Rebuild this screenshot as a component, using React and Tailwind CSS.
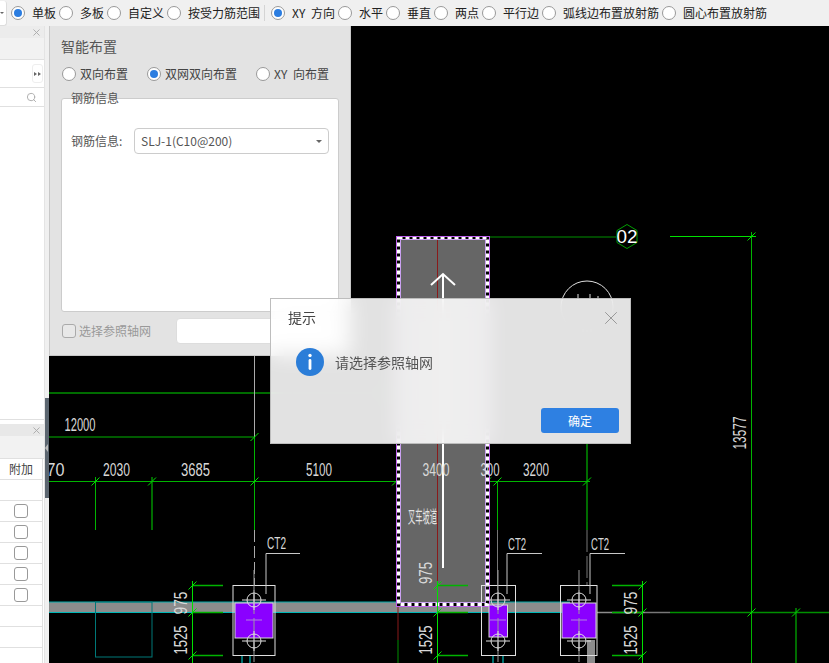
import { X, Search } from "lucide-react";

const topOptions = [
  { label: "单板", on: true },
  { label: "多板" },
  { label: "自定义" },
  { label: "按受力筋范围", sep: true },
  { label: "XY 方向", on: true },
  { label: "水平" },
  { label: "垂直" },
  { label: "两点" },
  { label: "平行边" },
  { label: "弧线边布置放射筋" },
  { label: "圆心布置放射筋" },
];

function Radio({ on }) {
  return (
    <span className="w-[14px] h-[14px] shrink-0 rounded-full border border-[#999] bg-white flex items-center justify-center">
      {on && <span className="w-[8px] h-[8px] rounded-full bg-[#2b7de0]" />}
    </span>
  );
}

function Check() {
  return <span className="block w-[14px] h-[14px] rounded-[3px] border border-[#999] bg-white" />;
}

const GREEN = "#00b400";
const BRIGHT = "#00e000";
const DARK = "#009000";
const GREY = "#9a9a9a";

function L({ a, b, c, d, s = GREEN, w = 1, dash }) {
  return <line x1={a} y1={b} x2={c} y2={d} stroke={s} strokeWidth={w} strokeDasharray={dash} />;
}

function Tick({ x, y }) {
  return <line x1={x - 4} y1={y + 4} x2={x + 4} y2={y - 4} stroke={BRIGHT} strokeWidth="1" />;
}

function Dim({ x, y, w, t, rot, size = 18 }) {
  return (
    <text
      x={x}
      y={y + size * 0.36}
      textAnchor="middle"
      textLength={w}
      lengthAdjust="spacingAndGlyphs"
      fontFamily="'Liberation Sans', sans-serif"
      fontSize={size}
      fill="#d8d8d8"
      transform={rot ? `rotate(-90 ${x} ${y})` : undefined}
    >
      {t}
    </text>
  );
}

function Bolt({ x, y }) {
  return (
    <g stroke="#e0e0e0" strokeWidth="1" fill="none">
      <circle cx={x} cy={y} r="7" />
      <line x1={x - 12} y1={y} x2={x + 12} y2={y} />
      <line x1={x} y1={y - 10} x2={x} y2={y + 10} />
    </g>
  );
}

function Cap({ x, w, px, pw, py, ph, cx }) {
  return (
    <g>
      <rect x={px} y={py} width={pw} height={ph} fill="#8a00ff" stroke="#d8d8d8" />
      <rect x={x} y="585.5" width={w} height="70" fill="none" stroke="#e0e0e0" />
      <line x1={cx} y1="570" x2={cx} y2="663" stroke={GREY} strokeDasharray="20 4" />
      <line x1={cx - 8} y1={620} x2={cx + 8} y2={620} stroke="#b080e0" />
      <Bolt x={cx} y={600} />
      <Bolt x={cx} y={641} />
    </g>
  );
}

function DimStack({ x, a, b }) {
  return (
    <g>
      <L a={x} b={581} c={x} d={663} s={BRIGHT} />
      <L a={a} b={585.5} c={b} d={585.5} s={GREEN} w={1.5} />
      <L a={a} b={612.5} c={b} d={612.5} s={GREEN} w={1.5} />
      <L a={a} b={655.5} c={b} d={655.5} s={GREEN} w={1.5} />
      <Tick x={x} y={585.5} />
      <Tick x={x} y={612.5} />
      <Tick x={x} y={655.5} />
    </g>
  );
}

function Canvas() {
  return (
    <svg viewBox="49 26 780 637" className="block w-[780px] h-[637px] bg-black">
      {/* 轴线 */}
      <L a={49} b={393} c={400} d={393} s={DARK} w={1.5} />
      <L a={49} b={437} c={255} d={437} />
      <L a={49} b={481.5} c={590} d={481.5} />
      <L a={490} b={237} c={616} d={237} s={DARK} />
      <L a={670} b={236.5} c={756} d={236.5} s={BRIGHT} />
      <L a={645} b={612.5} c={670} d={612.5} s="#777" w={1.5} />
      <L a={670} b={612.5} c={829} d={612.5} s={DARK} w={1.5} />
      <L a={751.5} b={232} c={751.5} d={663} s={GREEN} />
      <L a={796} b={608} c={796} d={663} s={DARK} w={1.5} />
      <L a={95.5} b={477} c={95.5} d={530} s={GREEN} />
      <L a={152} b={477} c={152} d={530} s={DARK} w={1.5} />
      <L a={254.5} b={356} c={254.5} d={437} s="#aaa" />
      <L a={254.5} b={437} c={254.5} d={530} s={GREEN} />
      <L a={254.5} b={530} c={254.5} d={585} s="#aaa" dash="12 4" />
      <L a={497.5} b={481} c={497.5} d={530} s={GREEN} />
      <L a={497.5} b={530} c={497.5} d={590} s="#777" />
      <L a={587} b={444} c={587} d={530} s={DARK} w={1.5} />
      <L a={587} b={530} c={587} d={585} s="#777" dash="22 4" />
      {[95.5, 152, 254.5, 396, 487, 497.5, 587].map((x) => (
        <Tick key={x} x={x} y={481.5} />
      ))}
      <Tick x={254.5} y={437} />
      <Tick x={751.5} y={236.5} />
      <Tick x={751.5} y={612.5} />
      <Tick x={796} y={612.5} />

      {/* 梁 */}
      <rect x="49" y="602" width="521" height="11" fill="#8c8c8c" />
      <L a={49} b={602} c={570} d={602} s="#00a8a8" />
      <L a={49} b={612.5} c={570} d={612.5} s="#00b8b8" />
      <rect x="95.5" y="602" width="56.5" height="55" fill="none" stroke="#007878" />
      <L a={597} b={612.5} c={645} d={612.5} s="#8c8c8c" w={1.5} />
      <rect x="587" y="640" width="8" height="23" fill="#8c8c8c" />
      {[242, 250, 493, 503].map((x) => (
        <L key={x} a={x} b={655} c={x} d={663} s="#00e0e0" />
      ))}

      {/* 坡道 */}
      <rect x="398" y="237" width="90" height="368" fill="#666" />
      <L a={437.5} b={237} c={437.5} d={583} s="#8a1a1a" />
      <L a={398} b={605} c={398} d={640} s="#8a1a1a" />
      <L a={398} b={640} c={398} d={663} s={DARK} />
      <path d="M443 568V274M431 285L443 274L455 285" fill="none" stroke="#fff" strokeWidth="2" />
      <rect x="398.5" y="237.5" width="89" height="367" fill="none" stroke="#000" strokeWidth="4" />
      <rect x="398.5" y="237.5" width="89" height="367" fill="none" stroke="#fff" strokeWidth="3" strokeDasharray="4 3" />
      <rect x="396.5" y="236.5" width="93" height="370" fill="none" stroke="#c060f0" />
      <rect x="400.5" y="239.5" width="85" height="363" fill="none" stroke="#c9a0f0" />
      <g transform="translate(422.5 523) scale(1 1.7)">
        <text
          textAnchor="middle"
          fontFamily="'Noto Sans CJK SC', sans-serif"
          fontSize="10"
          fill="#e4e4e4"
          textLength="29"
          lengthAdjust="spacingAndGlyphs"
        >
          叉车坡道
        </text>
      </g>

      {/* 承台 */}
      <Cap x={233} w={42} px={235} pw={38} py={603} ph={35} cx={254} />
      <Cap x={481.5} w={34} px={489} pw={18.5} py={605} ph={32} cx={498} />
      <Cap x={560.5} w={36.5} px={562} pw={34} py={603} ph={35} cx={579} />
      <path d="M266 594V553.5H300M507 594V553.5H542M590 594V553.5H625" fill="none" stroke="#c8c8c8" />

      <DimStack x={192.5} a={193} b={223} />
      <DimStack x={437.5} a={437} b={468} />
      <DimStack x={642.5} a={612} b={642} />

      {/* 标注 */}
      <Dim x={80} y={425} w={31} t="12000" />
      <Dim x={51} y={470} w={27} t="770" />
      <Dim x={116.5} y={470} w={27} t="2030" />
      <Dim x={195.5} y={470} w={29} t="3685" />
      <Dim x={319} y={470} w={26} t="5100" />
      <Dim x={436} y={470} w={27} t="3400" />
      <Dim x={490} y={470} w={19} t="300" />
      <Dim x={536} y={470} w={26} t="3200" />
      <Dim x={276.5} y={543} w={19} t="CT2" size={17} />
      <Dim x={517} y={544} w={18} t="CT2" size={17} />
      <Dim x={600} y={544} w={18} t="CT2" size={17} />
      <Dim x={740} y={433} w={33} t="13577" rot />
      {[181, 426, 631].map((x) => (
        <g key={x}>
          <Dim x={x} y={x === 426 ? 573 : 603} w={x === 426 ? 22 : 23} t="975" rot />
          <Dim x={x} y={640} w={29} t="1525" rot />
        </g>
      ))}

      {/* 轴号 */}
      <path d="M627 224.5L637 230.5V242.5L627 248.5L617 242.5V230.5Z" fill="none" stroke="#00a000" />
      <text x="627" y="243" textAnchor="middle" fontFamily="'Liberation Sans', sans-serif" fontSize="19" fill="#fff" textLength="21" lengthAdjust="spacingAndGlyphs">
        02
      </text>
      <circle cx="587" cy="307" r="26" fill="none" stroke="#e0e0e0" />
      <path d="M578 294V300M590 294V300M598 296V300" stroke="#e0e0e0" />
    </svg>
  );
}

export default function App() {
  return (
    <div className="relative w-[829px] h-[663px] overflow-hidden bg-[#f0f0f0] text-[12px] text-[#333] font-['Noto_Sans_CJK_SC','Liberation_Sans',sans-serif]">
      {/* 顶部选项 */}
      <div className="h-[26px] flex items-center bg-[#f0f0f0]">
        <div className="w-[7px] h-[25px] mr-[4px] bg-white rounded-r-[3px] border-r border-b border-[#ddd] flex items-center">
          <span className="w-0 h-0 border-x-[2px] border-x-transparent border-t-[2px] border-t-[#666]" />
        </div>
        <div className="flex items-center gap-[3px] text-[#222]">
          {topOptions.map((o) => (
            <div key={o.label} className="flex items-center">
              <Radio on={o.on} />
              <span className="ml-[7px] whitespace-nowrap leading-[26px] [word-spacing:3px]">{o.label}</span>
              {o.sep && <span className="ml-[4px] mr-[3px] w-px h-[16px] bg-[#d4d4d4]" />}
            </div>
          ))}
        </div>
      </div>

      <div className="flex h-[637px]">
        {/* 左侧面板 */}
        <div className="w-[45px] shrink-0 flex flex-col bg-white border-r border-[#e4e4e4]">
          <div className="h-[34px] shrink-0 bg-[#f2f2f2] border-b border-[#e0e0e0]">
            <div className="h-[12px] bg-[#ececec] flex justify-end items-center pr-[2px]">
              <X size={11} className="text-[#aaa]" />
            </div>
          </div>
          <div className="h-[28px] shrink-0 border-b border-[#e0e0e0] flex justify-end items-center pr-[1px]">
            <div className="w-[11px] h-[19px] rounded-[3px] border border-[#eee] flex items-center justify-center gap-[1px]">
              <span className="w-0 h-0 border-y-[2.5px] border-y-transparent border-l-[3px] border-l-[#666]" />
              <span className="w-0 h-0 border-y-[2.5px] border-y-transparent border-l-[3px] border-l-[#666]" />
            </div>
          </div>
          <div className="h-[19px] shrink-0 border-b border-[#e0e0e0] flex justify-end items-center pr-[7px]">
            <Search size={11} className="text-[#aaa]" />
          </div>
          <div className="h-[313px] shrink-0 border-b border-[#e0e0e0]" />
          <div className="h-[4px] shrink-0" />
          <div className="h-[12px] shrink-0 bg-[#e8e8e8] flex justify-end items-center pr-[2px]">
            <X size={11} className="text-[#aaa]" />
          </div>
          <div className="h-[23px] shrink-0 bg-[#f2f2f2] border-b border-[#e0e0e0]" />
          <div className="w-[43px] shrink-0 border-r border-[#e0e0e0]">
            <div className="h-[21px] flex items-center justify-center border-b border-[#e0e0e0] text-[#444]">附加</div>
            {[false, true, true, true, true, true, false, false, false].map((c, i) => (
              <div key={i} className="h-[21px] flex items-center justify-center border-b border-[#e0e0e0]">
                {c && <Check />}
              </div>
            ))}
          </div>
        </div>

        {/* 分隔条 */}
        <div className="w-[4px] shrink-0 bg-[#f0f0f0] pt-[372px]">
          <div className="h-[100px] bg-[#5c6670] flex items-center">
            <span className="w-0 h-0 border-y-[4px] border-y-transparent border-r-[3px] border-r-[#bbb]" />
          </div>
        </div>

        <Canvas />
      </div>

      {/* 智能布置 */}
      <div className="absolute left-[49px] top-[26px] w-[302px] h-[330px] bg-[#e3e3e3] border-x border-b border-[#c8c8c8] px-[11px]">
        <div className="pt-[10px] text-[14px] leading-[20px] text-[#555]">智能布置</div>
        <div className="mt-[8px] h-[20px] flex items-center text-[#444]">
          <div className="flex items-center gap-[4px] ml-[1px] w-[85px]">
            <Radio />
            <span>双向布置</span>
          </div>
          <div className="flex items-center gap-[4px] w-[109px]">
            <Radio on />
            <span>双网双向布置</span>
          </div>
          <div className="flex items-center gap-[4px]">
            <Radio />
            <span className="[word-spacing:3px]">XY 向布置</span>
          </div>
        </div>
        <div className="relative mt-[14px] w-[278px] h-[214px] bg-white border border-[#ccc] rounded-[3px] px-[9px] pt-[29px]">
          <span className="absolute left-[9px] top-[-10px] leading-[18px] text-[#555]">钢筋信息</span>
          <div className="flex items-center text-[#555]">
            <span className="w-[63px]">钢筋信息:</span>
            <div className="w-[195px] h-[26px] border border-[#ccc] rounded-[4px] flex items-center justify-between pl-[6px] pr-[6px]">
              <span>SLJ-1(C10@200)</span>
              <span className="w-0 h-0 border-x-[3px] border-x-transparent border-t-[3px] border-t-[#666]" />
            </div>
          </div>
        </div>
        <div className="mt-[6px] flex items-center">
          <span className="ml-[1px] block w-[14px] h-[14px] rounded-[3px] border border-[#aaa] bg-[#e8e8e8]" />
          <span className="ml-[3px] text-[#999] w-[97px]">选择参照轴网</span>
          <div className="w-[162px] h-[26px] bg-white border border-[#ddd] rounded-[4px]" />
        </div>
      </div>

      {/* 提示 */}
      <div className="absolute left-[270px] top-[298px] w-[361px] h-[146px] bg-white/[0.885] backdrop-blur-[10px] border border-[#bdbdbd]">
        <div className="flex items-center justify-between pl-[17px] pr-[8px] h-[37px]">
          <span className="text-[14px] text-[#444]">提示</span>
          <X size={22} strokeWidth={0.9} className="text-[#888]" />
        </div>
        <div className="flex items-center gap-[11px] pl-[25px] mt-[12px]">
          <svg width="28" height="28" viewBox="0 0 28 28">
            <circle cx="14" cy="14" r="14" fill="#2b7dd8" />
            <circle cx="14" cy="7.5" r="1.7" fill="#fff" />
            <rect x="12.6" y="11" width="2.8" height="11" rx="1.4" fill="#fff" />
          </svg>
          <span className="text-[14px] text-[#555]">请选择参照轴网</span>
        </div>
        <div className="absolute right-[11px] bottom-[10px] w-[78px] h-[25px] bg-[#2e80e2] rounded-[3px] text-white flex items-center justify-center">
          确定
        </div>
      </div>
    </div>
  );
}
